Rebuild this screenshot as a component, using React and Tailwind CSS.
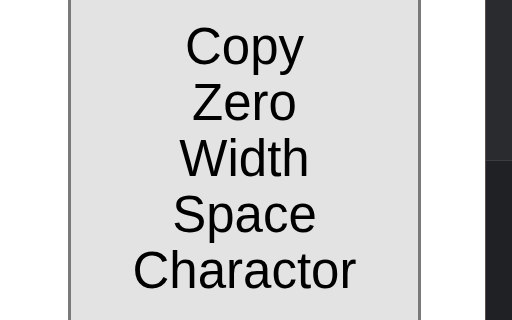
export default function App() {
  return (
    <div className="flex h-[320px] w-[512px] items-center overflow-hidden bg-white">
      <div className="w-[68px] shrink-0" />
      <button
        className="flex h-[360px] w-[353px] shrink-0 items-center justify-center border-[3px] border-[#7a7a7a] bg-[#e3e3e3] pb-[2px] text-center text-[51px] leading-[56px] text-black"
        style={{ fontFamily: '"Liberation Sans", Arial, sans-serif' }}
      >
        <span>
          Copy
          <br />
          Zero
          <br />
          Width
          <br />
          Space
          <br />
          Charactor
        </span>
      </button>
      <div className="flex-1 self-stretch" />
      <div className="flex w-[27px] shrink-0 flex-col self-stretch border-l border-[#5c4e4c]">
        <div className="h-[160px] bg-[#2a2b2f]" />
        <div className="h-px bg-[#3c3d40]" />
        <div className="flex-1 bg-[#202124]" />
      </div>
    </div>
  )
}
